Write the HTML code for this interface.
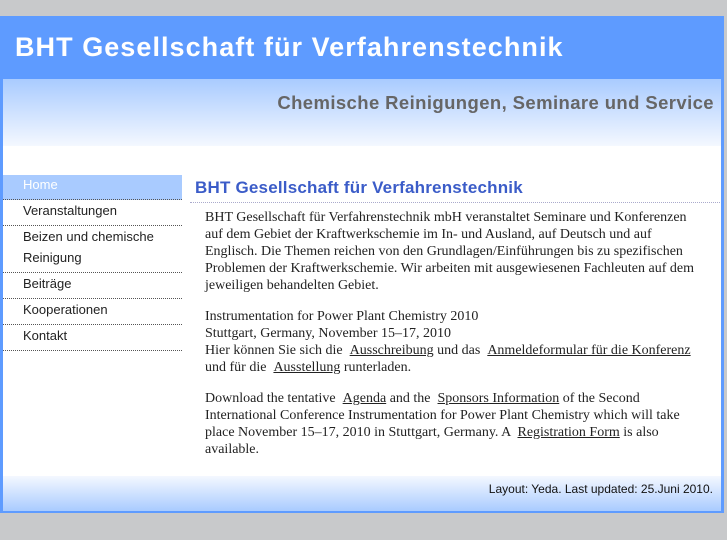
<!DOCTYPE html>
<html><head><meta charset="utf-8"><style>
body{margin:0;background:#c8c9cb;width:727px;height:545px;overflow:hidden;position:relative;font-family:"Liberation Sans",sans-serif}
#wrap{position:absolute;left:0;top:16px;width:724px;height:497px;background:#5e9bff}
#top{position:absolute;left:0;top:0;width:724px;height:63px;background:#5e9bff}
#top h1{margin:0;position:absolute;left:15px;top:16px;font-size:27px;font-weight:bold;color:#fff;letter-spacing:1.05px;white-space:nowrap}
#inner{position:absolute;left:3px;top:63px;width:718px;height:432px;background:#fff}
#sub{position:absolute;left:0;top:0;width:718px;height:67px;background:linear-gradient(#a9cbff,#f4f8ff)}
#sub div{position:absolute;right:7px;top:13px;font-size:18.5px;font-weight:bold;color:#666;letter-spacing:0.4px;white-space:nowrap}
#nav{position:absolute;left:0;top:96px;width:179px}
#nav div{height:25px;line-height:22px;border-bottom:1px dotted #555;padding-left:20px;font-size:13px;color:#222}
#nav div.h{background:#a9cbff;color:#fff;height:24px;line-height:20px}
#nav div.t{height:46px;line-height:21px;padding-top:0}
#main{position:absolute;left:187px;top:96px;width:530px}
#main h2{margin:0;font-size:17px;color:#3b5cc8;padding:5px 0 6px 5px;border-bottom:1px dotted #aac;line-height:16px;white-space:nowrap;letter-spacing:0.2px}
#main p{margin:0 0 14px 15px;width:500px;font-family:"Liberation Serif",serif;font-size:14px;line-height:17px;color:#222}
#main p:first-of-type{margin-top:6px}
a{color:#222;text-decoration:underline}
#foot{position:absolute;left:0;bottom:0;width:718px;height:35px;background:linear-gradient(#f4f8ff,#a9cbff)}
#foot div{position:absolute;right:8px;top:6px;font-size:12px;color:#111}
#bot{position:absolute;left:0;top:540px;width:727px;height:5px;background:#fff}
</style></head><body>
<div id="wrap">
<div id="top"><h1>BHT Gesellschaft für Verfahrenstechnik</h1></div>
<div id="inner">
<div id="sub"><div>Chemische Reinigungen, Seminare und Service</div></div>
<div id="nav">
<div class="h">Home</div>
<div>Veranstaltungen</div>
<div class="t">Beizen und chemische<br>Reinigung</div>
<div>Beiträge</div>
<div>Kooperationen</div>
<div>Kontakt</div>
</div>
<div id="main">
<h2>BHT Gesellschaft für Verfahrenstechnik</h2>
<p>BHT Gesellschaft für Verfahrenstechnik mbH veranstaltet Seminare und Konferenzen<br>auf dem Gebiet der Kraftwerkschemie im In- und Ausland, auf Deutsch und auf<br>Englisch. Die Themen reichen von den Grundlagen/Einführungen bis zu spezifischen<br>Problemen der Kraftwerkschemie. Wir arbeiten mit ausgewiesenen Fachleuten auf dem<br>jeweiligen behandelten Gebiet.</p>
<p>Instrumentation for Power Plant Chemistry 2010<br>Stuttgart, Germany, November 15–17, 2010<br>Hier können Sie sich die &nbsp;<a>Ausschreibung</a> und das &nbsp;<a>Anmeldeformular für die Konferenz</a><br>und für die &nbsp;<a>Ausstellung</a> runterladen.</p>
<p>Download the tentative &nbsp;<a>Agenda</a> and the &nbsp;<a>Sponsors Information</a> of the Second<br>International Conference Instrumentation for Power Plant Chemistry which will take<br>place November 15–17, 2010 in Stuttgart, Germany. A &nbsp;<a>Registration Form</a> is also<br>available.</p>
</div>
<div id="foot"><div>Layout: Yeda. Last updated: 25.Juni 2010.</div></div>
</div>
</div>
<div id="bot"></div>
</body></html>
